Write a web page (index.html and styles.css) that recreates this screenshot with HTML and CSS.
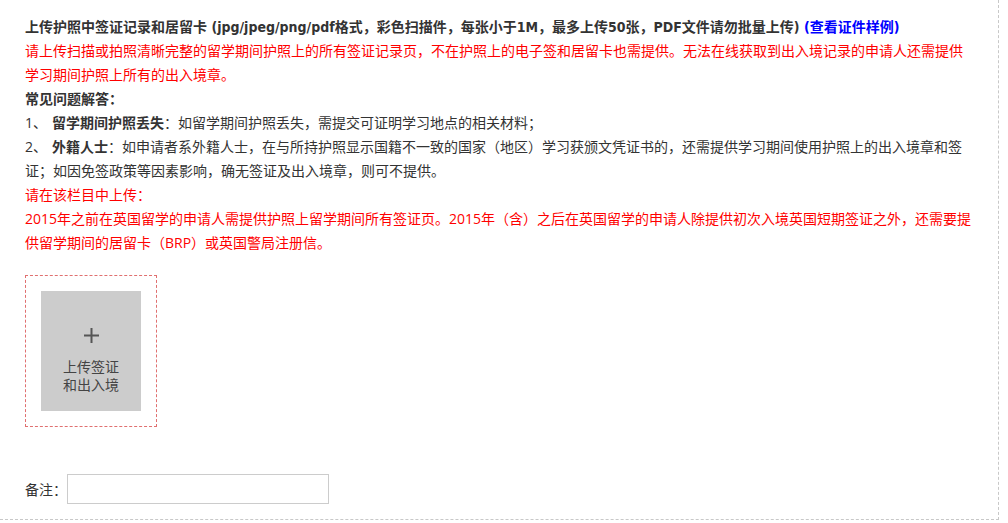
FILE: index.html
```html
<!DOCTYPE html>
<html lang="zh-CN">
<head>
<meta charset="utf-8">
<title>上传签证记录</title>
<link rel="stylesheet" href="styles.css">
</head>
<body>
<div class="panel">
  <div class="notes">
    <p class="title">上传护照中签证记录和居留卡 (jpg/jpeg/png/pdf格式，彩色扫描件，每张小于1M，最多上传50张，PDF文件请勿批量上传) <a class="sample" href="#">(查看证件样例)</a></p>
    <p class="red">请上传扫描或拍照清晰完整的留学期间护照上的所有签证记录页，不在护照上的电子签和居留卡也需提供。无法在线获取到出入境记录的申请人还需提供学习期间护照上所有的出入境章。</p>
    <p class="bold">常见问题解答：</p>
    <p><span class="num">1、</span><b>留学期间护照丢失</b>：如留学期间护照丢失，需提交可证明学习地点的相关材料；</p>
    <p><span class="num">2、</span><b>外籍人士</b>：如申请者系外籍人士，在与所持护照显示国籍不一致的国家（地区）学习获颁文凭证书的，还需提供学习期间使用护照上的出入境章和签证；如因免签政策等因素影响，确无签证及出入境章，则可不提供。</p>
    <p class="red">请在该栏目中上传：</p>
    <p class="red">2015年之前在英国留学的申请人需提供护照上留学期间所有签证页。2015年（含）之后在英国留学的申请人除提供初次入境英国短期签证之外，还需要提供留学期间的居留卡（BRP）或英国警局注册信。</p>
  </div>
  <div class="upload">
    <div class="upload-btn">
      <svg class="plus" width="15" height="15" viewBox="0 0 15 15"><path d="M7.5 0V15M0 7.5H15" stroke="#555" stroke-width="2"/></svg>
      <span class="upload-text">上传签证<br>和出入境</span>
    </div>
  </div>
  <div class="remark">
    <label class="remark-label" for="remark">备注：</label>
    <input class="remark-input" id="remark" type="text">
  </div>
</div>
</body>
</html>
```

FILE: styles.css
```css
html, body {
  margin: 0;
  padding: 0;
  background: #fff;
}
body {
  font-family: "Open Sans", "Noto Sans CJK SC", sans-serif;
  font-size: 14px;
  color: #333;
  text-spacing-trim: space-all;
}
.panel {
  box-sizing: border-box;
  width: 999px;
  height: 520px;
  border-right: 1px dashed #c8c8c8;
  border-bottom: 1px dashed #c8c8c8;
  padding: 15px 0 0 25px;
}
.notes {
  width: 948px;
  line-height: 24px;
}
.notes p {
  margin: 0;
}
.title, .bold, .notes b {
  font-weight: bold;
}
.title {
  font-family: "DejaVu Sans Condensed", "Open Sans", "Noto Sans CJK SC", sans-serif;
}
.sample {
  color: #0000ff;
  text-decoration: none;
  font-weight: bold;
}
.red {
  color: #ff0000;
}
.num {
  margin-right: 5px;
}
.upload {
  box-sizing: border-box;
  width: 132px;
  height: 152px;
  margin-top: 20px;
  padding: 15px;
  border: 1px dashed #e07070;
}
.upload-btn {
  width: 100px;
  height: 120px;
  background: #cccccc;
  display: flex;
  flex-direction: column;
  align-items: center;
  padding-top: 37px;
  box-sizing: border-box;
  color: #444;
}
.plus {
  display: block;
}
.upload-text {
  margin-top: 15px;
  line-height: 18px;
  text-align: center;
  font-size: 14px;
}
.remark {
  display: flex;
  align-items: center;
  margin-top: 47px;
}
.remark-label {
  font-size: 14px;
  color: #333;
}
.remark-input {
  box-sizing: border-box;
  width: 262px;
  height: 30px;
  margin: 0;
  border: 1px solid #cccccc;
  padding: 0 6px;
  font: inherit;
}
```
